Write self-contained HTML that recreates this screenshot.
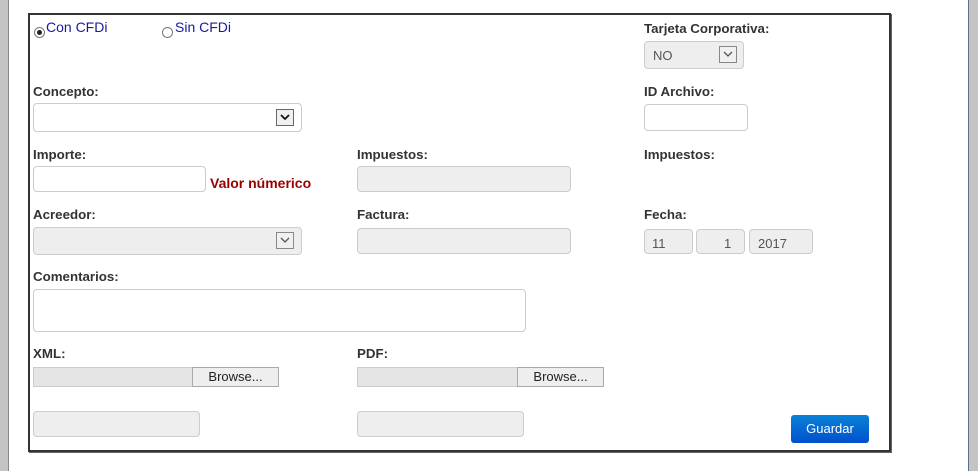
<!DOCTYPE html>
<html><head><meta charset="utf-8"><style>
body{margin:0;width:978px;height:471px;background:#fff;position:relative;overflow:hidden;font-family:"Liberation Sans",Arial,sans-serif;}
.a{position:absolute;}
.lb{position:absolute;font-size:13.3px;font-weight:bold;color:#333;line-height:14px;}
.in{position:absolute;box-sizing:border-box;border:1px solid #ccc;border-radius:4px;background:#fff;}
.dis{background:#eee;}
.dd{position:absolute;box-sizing:border-box;width:18px;height:17px;border:1px solid #888;background:#f0f0f0;}
.dd svg{display:block}
.file{position:absolute;box-sizing:border-box;height:20px;background:#e5e5e5;border:1px solid #ccc;}
.br{position:absolute;box-sizing:border-box;height:20px;width:87px;background:#eee;border:1px solid #aaa;font-size:13px;text-align:center;line-height:18px;color:#222;}
.rad{position:absolute;width:11px;height:11px;border:1px solid #777;border-radius:50%;box-sizing:border-box;background:#fff;}
.rt{position:absolute;font-size:14px;color:#1a1aa0;}
</style></head><body>
<div class="a" style="left:0;top:0;width:8px;height:471px;background:#c4c4c4;border-right:1px solid #888;"></div>
<div class="a" style="left:968px;top:0;width:10px;height:471px;background:#c4c4c4;border-left:1px solid #5a6f88;"></div>
<div class="a" style="left:28px;top:13px;width:859px;height:435px;border:2px solid #333;box-shadow:1px 1px 0 #666;"></div>

<div class="rad" style="left:34px;top:27px;"><div class="a" style="left:2px;top:2px;width:5px;height:5px;border-radius:50%;background:#222"></div></div>
<div class="rt" style="left:46px;top:19px;">Con CFDi</div>
<div class="rad" style="left:162px;top:27px;"></div>
<div class="rt" style="left:175px;top:19px;">Sin CFDi</div>

<div class="lb" style="left:644px;top:22px;">Tarjeta Corporativa:</div>
<div class="in dis" style="left:644px;top:41px;width:100px;height:28px;"><span class="a" style="left:8px;top:6px;font-size:13px;color:#555">NO</span></div>
<div class="dd" style="left:719px;top:46px;"><svg width="16" height="15"><path d="M4 5l4 4 4-4" stroke="#555" fill="none" stroke-width="1.3"/></svg></div>

<div class="lb" style="left:33px;top:85px;">Concepto:</div>
<div class="in" style="left:33px;top:103px;width:269px;height:29px;"></div>
<div class="dd" style="left:276px;top:109px;border-color:#666"><svg width="16" height="15"><path d="M4 5l4 4 4-4" stroke="#111" fill="none" stroke-width="1.8"/></svg></div>

<div class="lb" style="left:644px;top:85px;">ID Archivo:</div>
<div class="in" style="left:644px;top:104px;width:104px;height:27px;"></div>

<div class="lb" style="left:33px;top:148px;">Importe:</div>
<div class="in" style="left:33px;top:166px;width:173px;height:26px;"></div>
<div class="a" style="left:210px;top:175px;font-size:14px;font-weight:bold;color:#990000;">Valor númerico</div>
<div class="lb" style="left:357px;top:148px;">Impuestos:</div>
<div class="in dis" style="left:357px;top:166px;width:214px;height:26px;"></div>
<div class="lb" style="left:644px;top:148px;">Impuestos:</div>

<div class="lb" style="left:33px;top:208px;">Acreedor:</div>
<div class="in dis" style="left:33px;top:227px;width:269px;height:28px;"></div>
<div class="dd" style="left:276px;top:232px;"><svg width="16" height="15"><path d="M4 5l4 4 4-4" stroke="#555" fill="none" stroke-width="1.3"/></svg></div>
<div class="lb" style="left:357px;top:208px;">Factura:</div>
<div class="in dis" style="left:357px;top:228px;width:214px;height:26px;"></div>
<div class="lb" style="left:644px;top:208px;">Fecha:</div>
<div class="in dis" style="left:644px;top:229px;width:49px;height:25px;font-size:13px;color:#555;padding:6px 0 0 7px;">11</div>
<div class="in dis" style="left:696px;top:229px;width:49px;height:25px;font-size:13px;color:#555;padding:6px 0 0 27px;">1</div>
<div class="in dis" style="left:749px;top:229px;width:64px;height:25px;font-size:13px;color:#555;padding:6px 0 0 8px;">2017</div>

<div class="lb" style="left:33px;top:270px;">Comentarios:</div>
<div class="in" style="left:33px;top:289px;width:493px;height:43px;"></div>

<div class="lb" style="left:33px;top:347px;">XML:</div>
<div class="file" style="left:33px;top:367px;width:160px;"></div>
<div class="br" style="left:192px;top:367px;">Browse...</div>
<div class="lb" style="left:357px;top:347px;">PDF:</div>
<div class="file" style="left:357px;top:367px;width:161px;"></div>
<div class="br" style="left:517px;top:367px;">Browse...</div>

<div class="in dis" style="left:33px;top:411px;width:167px;height:26px;"></div>
<div class="in dis" style="left:357px;top:411px;width:167px;height:26px;"></div>
<div class="a" style="left:791px;top:415px;width:78px;height:28px;border-radius:3px;background:linear-gradient(#0a82d8,#0050cc);color:#fff;font-size:13px;text-align:center;line-height:28px;">Guardar</div>
</body></html>
